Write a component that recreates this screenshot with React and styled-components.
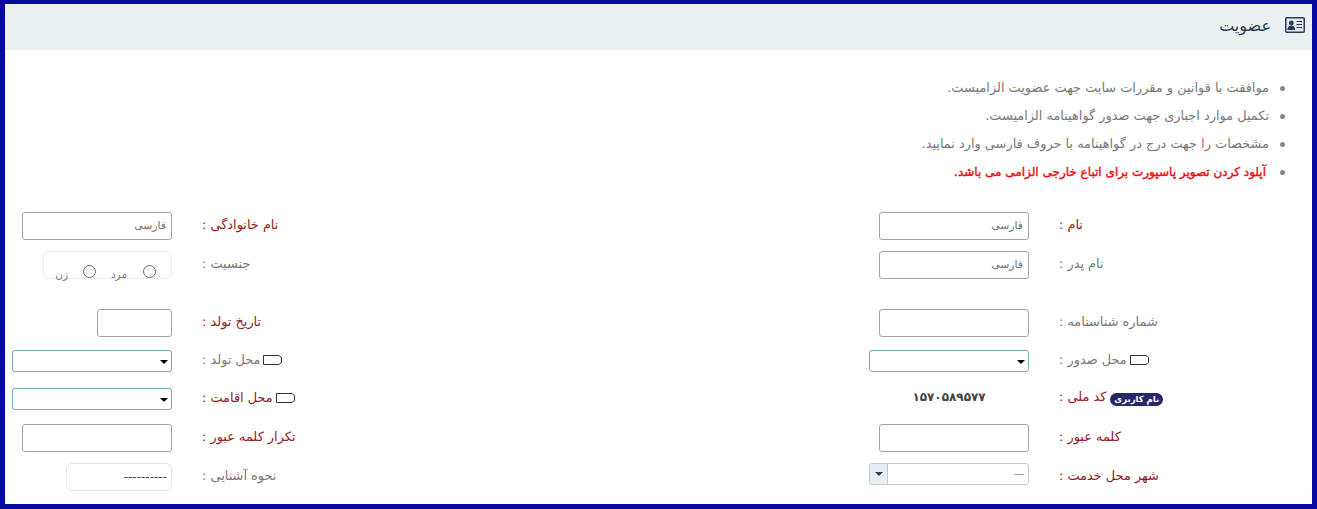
import React from 'react';
import styled, { createGlobalStyle } from 'styled-components';

const Global = createGlobalStyle`
  html, body { margin: 0; padding: 0; background: #fff; }
  body { font-family: "DejaVu Sans", sans-serif; }
`;

const Frame = styled.div`
  width: 1317px;
  height: 509px;
  box-sizing: border-box;
  border: solid #06099d;
  border-width: 4px 5px 5px 5px;
  background: #fff;
  overflow: hidden;
`;

const Header = styled.header`
  height: 46px;
  box-sizing: border-box;
  background: #ebf0f1;
  display: flex;
  align-items: center;
  justify-content: flex-start;
  flex-direction: row-reverse;
  padding: 0 7px 4px 0;
  gap: 14px;
`;

const Title = styled.h1`
  margin: 0;
  font-size: 16px;
  font-weight: 400;
  color: #2b3c58;
`;

const Notes = styled.ul`
  direction: rtl;
  margin: 0;
  padding: 24px 43px 0 0;
  list-style: none;
`;

const Note = styled.li`
  height: 28px;
  line-height: 28px;
  font-size: ${p => (p.$alert ? 12 : 12.9)}px;
  color: ${p => (p.$alert ? '#ee0a12' : '#77787a')};
  -webkit-text-stroke: ${p => (p.$alert ? '0.4px #ee0a12' : '0')};
  padding-right: ${p => (p.$alert ? 3 : 0)}px;
  position: relative;
  &::before {
    content: '';
    position: absolute;
    right: -16px;
    top: 12px;
    width: 5px;
    height: 5px;
    border-radius: 50%;
    background: #85868a;
  }
`;

const Form = styled.div`
  padding: 21px 0 0 7px;
`;

const Row = styled.div`
  display: grid;
  grid-template-columns: 160px 697px 160px 1fr;
  height: ${p => p.$h || 38}px;
  align-items: center;
  margin-top: ${p => p.$gap || 0}px;
`;

const Control = styled.div`
  display: flex;
  justify-content: flex-end;
  align-items: center;
`;

const TopControl = styled(Control)`
  align-self: start;
  margin-top: 5px;
  align-items: flex-start;
`;

const Label = styled.div`
  direction: rtl;
  text-align: left;
  padding-left: 30px;
  font-size: 12.9px;
  color: ${p => (p.$req ? '#8f1a1f' : '#77787a')};
  position: relative;
  top: -2px;
`;

const TextBox = styled.div`
  box-sizing: border-box;
  width: ${p => p.$w || 150}px;
  height: 28px;
  border: 1px solid #a3a3a3;
  border-radius: 3px;
  background: #fff;
  direction: rtl;
  font-size: 10.8px;
  color: #6f6f6f;
  line-height: 26px;
  padding-right: 5px;
`;

const SelectBox = styled.div`
  box-sizing: border-box;
  width: 160px;
  height: 22px;
  border: 1px solid #7da9b8;
  border-radius: 3px;
  background: #fff;
  position: relative;
  &::after {
    content: '';
    position: absolute;
    right: 3px;
    top: 9px;
    border: 4px solid transparent;
    border-top: 4px solid #000;
    border-bottom: 0;
  }
`;

const ComboBox = styled.div`
  box-sizing: border-box;
  width: 160px;
  height: 22px;
  border: 1px solid #c5c9cc;
  border-radius: 3px;
  background: #fff;
  display: flex;
  justify-content: space-between;
  overflow: hidden;
`;

const ComboButton = styled.span`
  width: 17px;
  background: #e6eef6;
  border-right: 1px solid #c5c9cc;
  display: flex;
  align-items: center;
  justify-content: center;
  &::after {
    content: '';
    border: 4px solid transparent;
    border-top: 4px solid #2c3e5a;
    border-bottom: 0;
  }
`;

const ComboValue = styled.span`
  font-size: 10px;
  line-height: 20px;
  color: #888;
  padding-right: 4px;
`;

const RadioBox = styled.div`
  box-sizing: border-box;
  width: 129px;
  height: 28px;
  border: 1px solid #ececec;
  border-radius: 6px;
  direction: rtl;
  display: flex;
  align-items: flex-start;
  padding: 13px 15px 0 0;
`;

const Radio = styled.span`
  box-sizing: border-box;
  width: 13px;
  height: 13px;
  border: 1px solid #666;
  border-radius: 50%;
  flex: none;
  margin-right: ${p => p.$m || 0}px;
`;

const RadioText = styled.span`
  font-size: 10.5px;
  color: #77787a;
  width: ${p => p.$w}px;
  margin-right: ${p => p.$m}px;
  line-height: 12px;
  padding-top: 3px;
  white-space: nowrap;
`;

const SelectOnly = styled(TextBox)`
  width: 106px;
  border: 1px solid #e4e4e4;
  border-radius: 6px;
  color: #444;
  font-size: 12px;
  padding-right: 4px;
  line-height: 26px;
`;

const Code = styled.div`
  width: 160px;
  text-align: center;
  direction: rtl;
  font-weight: 700;
  font-size: 12px;
  color: #444;
  position: relative;
  top: -2px;
`;

const Badge = styled.span`
  display: inline-block;
  background: #272668;
  color: #fff;
  font-size: 8.5px;
  font-weight: 700;
  line-height: 13px;
  height: 13px;
  padding: 0 4px;
  border-radius: 7px;
  margin-left: 4px;
  vertical-align: -1px;
`;

const TagSvg = styled.svg`
  width: 19px;
  height: 10px;
  margin-left: 3px;
  vertical-align: -1px;
`;

const TagIcon = () => (
  <TagSvg viewBox="0 0 19 10" fill="none" stroke="#333" strokeWidth="1">
    <path d="M.5 .5H16L18.5 2.5V7.5L16 9.5H.5z" />
  </TagSvg>
);

const CardIcon = () => (
  <svg width="20" height="16" viewBox="0 0 20 16">
    <rect x=".75" y=".75" width="18.5" height="14.5" rx="1" fill="#e4e9ee" stroke="#2b3c58" strokeWidth="1.5" />
    <circle cx="6.3" cy="6" r="2.4" fill="#2b3c58" />
    <path d="M2.4 13c0-3 1.7-4.4 3.9-4.4s3.9 1.4 3.9 4.4z" fill="#2b3c58" />
    <path d="M11.5 4.5h5.5M11.5 7.5h5.5M11.5 10.5h5.5" stroke="#2b3c58" strokeWidth="1.2" />
  </svg>
);

export default function App() {
  return (
    <Frame>
      <Global />
      <Header>
        <CardIcon />
        <Title dir="rtl">عضویت</Title>
      </Header>
      <Notes>
        <Note>موافقت با قوانین و مقررات سایت جهت عضویت الزامیست.</Note>
        <Note>تکمیل موارد اجباری جهت صدور گواهینامه الزامیست.</Note>
        <Note>مشخصات را جهت درج در گواهینامه با حروف فارسی وارد نمایید.</Note>
        <Note $alert>آپلود کردن تصویر پاسپورت برای اتباع خارجی الزامی می باشد.</Note>
      </Notes>
      <Form>
        <Row>
          <Control><TextBox>فارسی</TextBox></Control>
          <Label $req>نام خانوادگی :</Label>
          <Control><TextBox>فارسی</TextBox></Control>
          <Label $req>نام :</Label>
        </Row>
        <Row $h={40}>
          <Control>
            <RadioBox>
              <Radio />
              <RadioText $w={16} $m={16}>مرد</RadioText>
              <Radio $m={15} />
              <RadioText $w={14} $m={15}>زن</RadioText>
            </RadioBox>
          </Control>
          <Label>جنسیت :</Label>
          <Control><TextBox>فارسی</TextBox></Control>
          <Label>نام پدر :</Label>
        </Row>
        <Row $gap={19}>
          <Control><TextBox $w={75} /></Control>
          <Label $req>تاریخ تولد :</Label>
          <Control><TextBox /></Control>
          <Label>شماره شناسنامه :</Label>
        </Row>
        <Row>
          <Control><SelectBox /></Control>
          <Label><TagIcon />محل تولد :</Label>
          <Control><SelectBox /></Control>
          <Label><TagIcon />محل صدور :</Label>
        </Row>
        <Row>
          <Control><SelectBox /></Control>
          <Label $req><TagIcon />محل اقامت :</Label>
          <Control><Code>۱۵۷۰۵۸۹۵۷۷</Code></Control>
          <Label $req><Badge>نام کاربری</Badge>کد ملی :</Label>
        </Row>
        <Row $h={40}>
          <Control><TextBox /></Control>
          <Label $req>تکرار کلمه عبور :</Label>
          <Control><TextBox /></Control>
          <Label $req>کلمه عبور :</Label>
        </Row>
        <Row $h={38}>
          <TopControl><SelectOnly>----------</SelectOnly></TopControl>
          <Label>نحوه آشنایی :</Label>
          <TopControl>
            <ComboBox>
              <ComboButton />
              <ComboValue>—</ComboValue>
            </ComboBox>
          </TopControl>
          <Label $req>شهر محل خدمت :</Label>
        </Row>
      </Form>
    </Frame>
  );
}
